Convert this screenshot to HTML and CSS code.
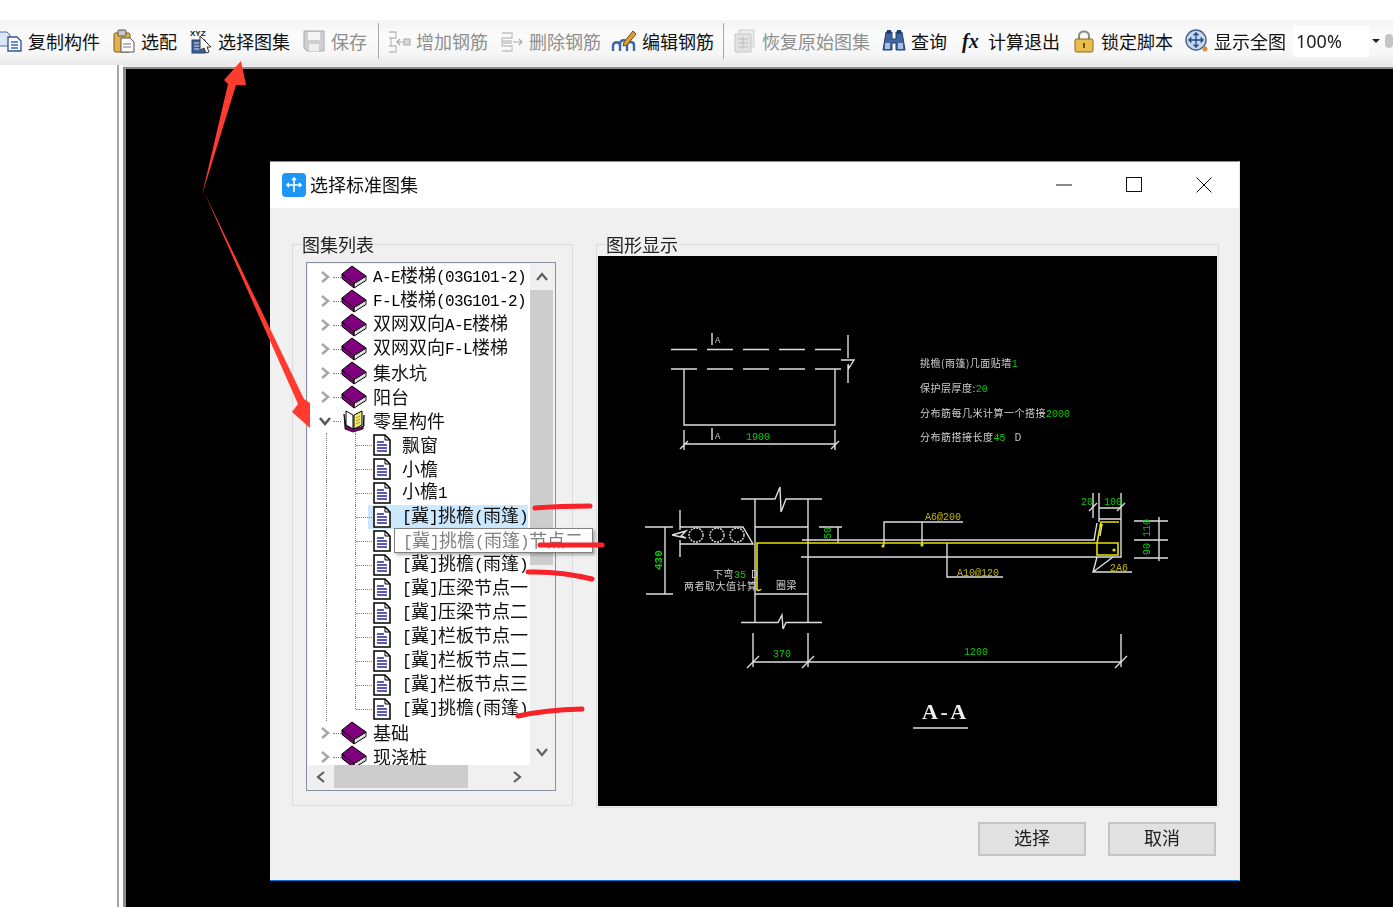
FILE: index.html
```html
<!DOCTYPE html>
<html lang="zh-CN">
<head>
    <meta charset="UTF-8">
    <title>选择标准图集</title>
    <link rel="stylesheet" href="styles.css">
</head>
<body>
    <!-- shared tree icons -->
    <svg class="sprite">
        <symbol id="book" viewBox="0 0 26 24">
            <path d="M13 18.5L25 11V15.5L13 23Z" fill="#fff" stroke="#000"/>
            <path d="M15 20.5L24.500 14.500M15 18.500L24.500 12.500" stroke="#999" stroke-width=".7"/>
            <path d="M1 9V13.500L13 23V18.500Z" fill="#800080" stroke="#000"/>
            <path d="M1 9L11 1L25 11L13 18.500Z" fill="#800080" stroke="#000"/>
        </symbol>
        <symbol id="openbook" viewBox="0 0 24 24">
            <path d="M2 5L3 20L11 23L21 20L22 6V17L12 20L4 17Z" fill="#800080" stroke="#000" stroke-width=".8"/>
            <path d="M4 2L11 6V20L4 16Z" fill="#fff" stroke="#000"/>
            <path d="M12 6L20 2V16L12 20Z" fill="#f5ea70" stroke="#000"/>
            <path d="M14 9L18 7M14 12L18 10M14 15L18 13" stroke="#a09020"/>
        </symbol>
        <symbol id="doc" viewBox="0 0 18 22">
            <path d="M1 1H12L17 6V21H1Z" fill="#fff" stroke="#000" stroke-width="1.5"/>
            <path d="M12 1V6H17" fill="none" stroke="#000"/>
            <path d="M4 8H11M4 11H14M4 14H14M4 17H14" stroke="#2424a8" stroke-width="1.5"/>
        </symbol>
        <symbol id="chev-right" viewBox="0 0 14 14">
            <path d="M4 2L10 7L4 12" fill="none" stroke="#a8a8a8" stroke-width="2.6"/>
        </symbol>
        <symbol id="chev-down" viewBox="0 0 14 14">
            <path d="M2 4L7 10L12 4" fill="none" stroke="#595959" stroke-width="2.6"/>
        </symbol>
    </svg>

    <div class="page">
        <div class="top-strip"></div>

        <!-- Toolbar -->
        <div class="toolbar">
            <div class="tool">
                <svg class="tool-icon" viewBox="0 0 24 24">
                    <path d="M-4 3H8L11 6V17H-4Z" fill="#dbe6f5" stroke="#4a6ea8"/>
                    <path d="M9 8H18L22 12V22H9Z" fill="#fff" stroke="#2f5aa0" stroke-width="1.4"/>
                    <path d="M12 13H19M12 16H19M12 19H19" stroke="#3a6ab0" stroke-width="1.3"/>
                </svg>
                <span>复制构件</span>
            </div>
            <div class="tool">
                <svg class="tool-icon" viewBox="0 0 24 24">
                    <rect x="2" y="4" width="16" height="19" rx="1.5" fill="#e3b04a" stroke="#7a5a1e"/>
                    <rect x="6" y="1" width="8" height="6" rx="1" fill="#c9c9c0" stroke="#555"/>
                    <path d="M9 9H18L22 13V23H9Z" fill="#fff" stroke="#555"/>
                    <path d="M11 15H19M11 18H19" stroke="#777"/>
                </svg>
                <span>选配</span>
            </div>
            <div class="tool">
                <svg class="tool-icon" viewBox="0 0 24 24">
                    <text class="xyz" x="1" y="7">XYZ</text>
                    <rect x="3" y="11" width="13" height="13" fill="#3d5f96" stroke="#26406b"/>
                    <path d="M5 14H14M5 17H14M5 20H14" stroke="#cfe0f5" stroke-width="1.2"/>
                    <path d="M11 7L22 18L18 18L20 23L17 24L15 19L11 21Z" fill="#fff" stroke="#333"/>
                </svg>
                <span>选择图集</span>
            </div>
            <div class="tool off">
                <svg class="tool-icon" viewBox="0 0 24 24">
                    <path d="M2 2H22V22H5L2 19Z" fill="#cfcfcf" stroke="#aaa"/>
                    <rect x="6" y="3" width="12" height="8" fill="#f4f4f4"/>
                    <rect x="7" y="15" width="10" height="7" fill="#eee"/>
                </svg>
                <span>保存</span>
            </div>
            <div class="sep sep-a"></div>
            <div class="tool off">
                <svg class="tool-icon" viewBox="0 0 24 24">
                    <path d="M2 3H9V9H2M2 17H9V23H2M4 9V17" fill="none" stroke="#bdbdbd" stroke-width="1.3"/>
                    <path d="M10 13H17M13 10L10 13L13 16" fill="none" stroke="#a8a8a8" stroke-width="1.2"/>
                    <rect x="17" y="10" width="6" height="6" fill="#d8d8d8" stroke="#aaa"/>
                </svg>
                <span>增加钢筋</span>
            </div>
            <div class="tool off">
                <svg class="tool-icon" viewBox="0 0 24 24">
                    <path d="M2 4H12V9H2M2 17H12V22H2M2 9V17M2 12H12M2 14H12" fill="none" stroke="#c2c2c2" stroke-width="1.3"/>
                    <path d="M13 13H22M19 10L22 13L19 16" fill="none" stroke="#a8a8a8" stroke-width="1.2"/>
                </svg>
                <span>删除钢筋</span>
            </div>
            <div class="tool">
                <svg class="tool-icon tool-icon-wide" viewBox="0 0 26 24">
                    <path d="M2 22V17C2 12 9 12 9 17V22M9 20V15C9 10 16 10 16 15V22M16 21V16C16 12 23 12 23 16V22" fill="none" stroke="#3b66a8" stroke-width="2.4"/>
                    <path d="M13 13L22 2L25 5L16 16L12 17Z" fill="#e0a030" stroke="#6b4a14"/>
                </svg>
                <span>编辑钢筋</span>
            </div>
            <div class="sep sep-b"></div>
            <div class="tool off">
                <svg class="tool-icon" viewBox="0 0 24 24">
                    <path d="M2 5H18V23H2Z" fill="#e2e2e2" stroke="#c6c6c6"/>
                    <path d="M6 1H21V18H18V5H6Z" fill="#ececec" stroke="#cfcfcf"/>
                    <path d="M5 10H15M5 14H15M5 18H15M10 8V20" stroke="#bdbdbd"/>
                </svg>
                <span>恢复原始图集</span>
            </div>
            <div class="tool">
                <svg class="tool-icon" viewBox="0 0 24 24">
                    <path d="M4 3H10V10H14V3H20L23 21H14V14H10V21H1Z" fill="#41659f" stroke="#22406f"/>
                    <path d="M3 14H8V20H3ZM16 14H21V20H16Z" fill="#a8c0e4"/>
                    <rect x="5" y="1" width="4" height="4" fill="#22406f"/>
                    <rect x="15" y="1" width="4" height="4" fill="#22406f"/>
                </svg>
                <span>查询</span>
            </div>
            <div class="tool">
                <svg class="tool-icon" viewBox="0 0 24 24">
                    <text class="fx" x="3" y="19">fx</text>
                </svg>
                <span>计算退出</span>
            </div>
            <div class="tool">
                <svg class="tool-icon" viewBox="0 0 24 24">
                    <path d="M7 11V7C7 1 17 1 17 7V11" fill="none" stroke="#8c8c80" stroke-width="2"/>
                    <rect x="3" y="10" width="18" height="13" rx="1.5" fill="#e8bd4c" stroke="#8a6a1c"/>
                    <path d="M12 14V19" stroke="#6b4f10" stroke-width="2"/>
                </svg>
                <span>锁定脚本</span>
            </div>
            <div class="tool">
                <svg class="tool-icon" viewBox="0 0 24 24">
                    <circle cx="11" cy="11" r="10" fill="#c5d6ef" stroke="#44628f" stroke-width="1.4"/>
                    <path d="M11 4V18M4 11H18M8.5 6.5L11 4L13.5 6.5M8.5 15.5L11 18L13.5 15.5M6.5 8.5L4 11L6.5 13.5M15.5 8.5L18 11L15.5 13.5" fill="none" stroke="#24457c" stroke-width="1.3"/>
                    <circle cx="20" cy="20" r="2.5" fill="#e09030"/>
                </svg>
                <span>显示全图</span>
            </div>
            <div class="zoom-box">
                <span class="zoom-value">100%</span>
            </div>
            <div class="zoom-arrow"></div>
            <div class="zoom-end"></div>
        </div>

        <!-- Workspace behind the dialog -->
        <div class="workspace">
            <div class="side"></div>
            <div class="canvas"></div>
        </div>

        <!-- Dialog -->
        <div class="dialog">
            <div class="title-bar">
                <svg class="app-icon" viewBox="0 0 24 24">
                    <rect width="24" height="24" rx="4" fill="#1e96f5"/>
                    <path d="M12 5V19M5 12H19M10 7L12 5L14 7M7 10L5 12L7 14M17 10L19 12L17 14" fill="none" stroke="#fff" stroke-width="1.6"/>
                </svg>
                <span class="title-text">选择标准图集</span>
                <div class="win-btn">
                    <svg width="16" height="16" viewBox="0 0 16 16"><path d="M0 8H16" stroke="#111"/></svg>
                </div>
                <div class="win-btn">
                    <svg width="16" height="16" viewBox="0 0 16 16"><rect x=".5" y=".5" width="15" height="14" fill="none" stroke="#111"/></svg>
                </div>
                <div class="win-btn">
                    <svg width="16" height="16" viewBox="0 0 16 16"><path d="M.5 .5L15.5 15.5M15.5 .5L.5 15.5" stroke="#111"/></svg>
                </div>
            </div>

            <div class="dialog-body">
                <fieldset class="group group-list">
                    <legend>图集列表</legend>
                    <div class="tree">
                        <div class="tree-list">
                            <div class="row top"><svg class="exp"><use href="#chev-right"/></svg><svg class="book"><use href="#book"/></svg><span><span class="la">A-E</span>楼梯<span class="la">(03G101-2)</span></span></div>
                            <div class="row top"><svg class="exp"><use href="#chev-right"/></svg><svg class="book"><use href="#book"/></svg><span><span class="la">F-L</span>楼梯<span class="la">(03G101-2)</span></span></div>
                            <div class="row top"><svg class="exp"><use href="#chev-right"/></svg><svg class="book"><use href="#book"/></svg><span>双网双向<span class="la">A-E</span>楼梯</span></div>
                            <div class="row top"><svg class="exp"><use href="#chev-right"/></svg><svg class="book"><use href="#book"/></svg><span>双网双向<span class="la">F-L</span>楼梯</span></div>
                            <div class="row top"><svg class="exp"><use href="#chev-right"/></svg><svg class="book"><use href="#book"/></svg><span>集水坑</span></div>
                            <div class="row top"><svg class="exp"><use href="#chev-right"/></svg><svg class="book"><use href="#book"/></svg><span>阳台</span></div>
                            <div class="row top"><svg class="exp"><use href="#chev-down"/></svg><svg class="book"><use href="#openbook"/></svg><span>零星构件</span></div>
                            <div class="row child"><div class="node"><svg class="doc"><use href="#doc"/></svg><span>飘窗</span></div></div>
                            <div class="row child"><div class="node"><svg class="doc"><use href="#doc"/></svg><span>小檐</span></div></div>
                            <div class="row child"><div class="node"><svg class="doc"><use href="#doc"/></svg><span>小檐<span class="la">1</span></span></div></div>
                            <div class="row child"><div class="node selected"><svg class="doc"><use href="#doc"/></svg><span><span class="la">[</span>冀<span class="la">]</span>挑檐<span class="la">(</span>雨篷<span class="la">)</span></span></div></div>
                            <div class="row child"><div class="node"><svg class="doc"><use href="#doc"/></svg></div></div>
                            <div class="row child"><div class="node"><svg class="doc"><use href="#doc"/></svg><span><span class="la">[</span>冀<span class="la">]</span>挑檐<span class="la">(</span>雨篷<span class="la">)</span></span></div></div>
                            <div class="row child"><div class="node"><svg class="doc"><use href="#doc"/></svg><span><span class="la">[</span>冀<span class="la">]</span>压梁节点一</span></div></div>
                            <div class="row child"><div class="node"><svg class="doc"><use href="#doc"/></svg><span><span class="la">[</span>冀<span class="la">]</span>压梁节点二</span></div></div>
                            <div class="row child"><div class="node"><svg class="doc"><use href="#doc"/></svg><span><span class="la">[</span>冀<span class="la">]</span>栏板节点一</span></div></div>
                            <div class="row child"><div class="node"><svg class="doc"><use href="#doc"/></svg><span><span class="la">[</span>冀<span class="la">]</span>栏板节点二</span></div></div>
                            <div class="row child"><div class="node"><svg class="doc"><use href="#doc"/></svg><span><span class="la">[</span>冀<span class="la">]</span>栏板节点三</span></div></div>
                            <div class="row child last"><div class="node"><svg class="doc"><use href="#doc"/></svg><span><span class="la">[</span>冀<span class="la">]</span>挑檐<span class="la">(</span>雨篷<span class="la">)</span></span></div></div>
                            <div class="row top"><svg class="exp"><use href="#chev-right"/></svg><svg class="book"><use href="#book"/></svg><span>基础</span></div>
                            <div class="row top"><svg class="exp"><use href="#chev-right"/></svg><svg class="book"><use href="#book"/></svg><span>现浇桩</span></div>
                        </div>
                        <div class="vbar">
                            <div class="sb-btn"><svg width="14" height="14" viewBox="0 0 14 14"><path d="M2 10L7 4L12 10" fill="none" stroke="#606060" stroke-width="2.2"/></svg></div>
                            <div class="vthumb"></div>
                            <div class="sb-space"></div>
                            <div class="sb-btn"><svg width="14" height="14" viewBox="0 0 14 14"><path d="M2 4L7 10L12 4" fill="none" stroke="#606060" stroke-width="2.2"/></svg></div>
                        </div>
                        <div class="hbar">
                            <div class="sb-btn-h"><svg width="14" height="14" viewBox="0 0 14 14"><path d="M10 2L4 7L10 12" fill="none" stroke="#606060" stroke-width="2.2"/></svg></div>
                            <div class="hthumb"></div>
                            <div class="sb-space"></div>
                            <div class="sb-btn-h"><svg width="14" height="14" viewBox="0 0 14 14"><path d="M4 2L10 7L4 12" fill="none" stroke="#606060" stroke-width="2.2"/></svg></div>
                        </div>
                        <div class="tooltip"><span class="la">[</span>冀<span class="la">]</span>挑檐<span class="la">(</span>雨篷<span class="la">)</span>节点二</div>
                    </div>
                </fieldset>

                <fieldset class="group group-view">
                    <legend>图形显示</legend>
                    <svg class="drawing" viewBox="598 256 619 550">
                        <!-- plan -->
                        <path class="ln" d="M671 349.5H697M707 349.5H733M743 349.5H769M779 349.5H805M815 349.5H841"/>
                        <path class="ln" d="M671 369H697M707 369H733M743 369H769M779 369H805M815 369H841"/>
                        <path class="ln" d="M684 369V425H835V369"/>
                        <path class="ln" d="M712 333V345M712 428V440"/>
                        <path class="ln" d="M848 335V358M841 360H854L849 368L848 364M848 365V383"/>
                        <path class="ln" d="M684 430V450M835 430V450M684 444H835M680 449L688 441M831 449L839 441"/>
                        <text class="tag" x="715" y="343">A</text>
                        <text class="tag" x="715" y="439">A</text>
                        <text class="dim" x="746" y="440">1900</text>

                        <!-- notes -->
                        <text class="note" x="920" y="367">挑檐(雨篷)几面贴墙<tspan class="dim">1</tspan></text>
                        <text class="note" x="920" y="392">保护层厚度:<tspan class="dim">20</tspan></text>
                        <text class="note" x="920" y="417">分布筋每几米计算一个搭接<tspan class="dim">2000</tspan></text>
                        <text class="note" x="920" y="441">分布筋搭接长度<tspan class="dim">45</tspan><tspan dx="9">D</tspan></text>

                        <!-- section: beam -->
                        <path class="ln" d="M741 499H775L780 487L781 512L786 499H822"/>
                        <path class="ln" d="M755 499V622M808 499V622"/>
                        <path class="ln" d="M755 527H808M755 594H808"/>
                        <path class="ln" d="M741 622.5H778L782 615L783 629L786 622.5H822"/>

                        <!-- section: hollow slab -->
                        <path class="ln" d="M680 510V530M680 540V557M672 535L686 531L681 536L686 538L672 535"/>
                        <path class="ln" d="M680 527H743L753 544H680"/>
                        <circle class="ln dotted" cx="696" cy="535" r="7"/>
                        <circle class="ln dotted" cx="717" cy="535" r="7"/>
                        <circle class="ln dotted" cx="737" cy="535" r="7"/>
                        <path class="ln" d="M645 527H673M646 594H673M665 527V594"/>
                        <text class="dim dim-big" transform="translate(662 570) rotate(-90)">430</text>

                        <!-- section: cantilever -->
                        <path class="ln" d="M802 540H1095M801 557H1097"/>
                        <path class="ln" d="M819 527H842M838 527V543"/>
                        <text class="dim" transform="translate(831 539) rotate(-90)">50</text>
                        <path class="ln" d="M884 545V522H963M922 522V545"/>
                        <path class="ln" d="M947 543V577H1003"/>
                        <path class="reb" d="M761 589Q760 591 757 590V543H1097"/>
                        <circle class="reb-dot" cx="883" cy="546" r="1.6"/>
                        <circle class="reb-dot" cx="922" cy="545" r="1.6"/>
                        <text class="rtag" x="925" y="520">A6@200</text>
                        <text class="rtag" x="957" y="576">A10@120</text>
                        <text class="note" x="713" y="578">下弯<tspan class="dim">35</tspan><tspan dx="5">D</tspan></text>
                        <text class="note" x="684" y="590">两者取大值计算</text>
                        <text class="note" x="776" y="589">圈梁</text>

                        <!-- upstand at the slab end -->
                        <path class="ln" d="M1099 493V522M1093 493V518M1121 493V557H1097M1099 508H1121M1099 519H1121"/>
                        <path class="ln" d="M1097 523L1094 540M1102 524L1100 536"/>
                        <path class="ln" d="M1097 557L1093 572H1132M1093 572L1113 557"/>
                        <path class="ln" d="M1089 511L1097 503M1117 511L1125 503"/>
                        <path class="reb" d="M1119 522H1101L1097 543V555H1118V543H1097"/>
                        <circle class="reb-dot" cx="1101" cy="525" r="1.6"/>
                        <circle class="reb-dot" cx="1114" cy="550" r="1.6"/>
                        <text class="dim" x="1081" y="505">20</text>
                        <text class="dim" x="1104" y="505">100</text>
                        <text class="rtag" x="1110" y="571">2A6</text>
                        <path class="ln" d="M1134 521H1168M1134 540H1168M1134 558H1168M1159 517V561"/>
                        <text class="dim" transform="translate(1150 537) rotate(-90)">110</text>
                        <text class="dim" transform="translate(1150 555) rotate(-90)">90</text>

                        <!-- overall dimensions -->
                        <path class="ln" d="M753 633V667M808 633V667M1121 634V667M753 662H1121"/>
                        <path class="ln" d="M747 668L759 656M802 668L814 656M1115 668L1127 656"/>
                        <text class="dim" x="773" y="657">370</text>
                        <text class="dim" x="964" y="655">1200</text>

                        <text class="sec-title" x="922" y="719">A-A</text>
                        <path class="ln" d="M913 728H968"/>
                    </svg>
                </fieldset>
            </div>

            <div class="dialog-foot">
                <div class="btn">选择</div>
                <div class="btn">取消</div>
            </div>
        </div>

        <!-- Red annotations drawn over the screenshot -->
        <svg class="marks" viewBox="0 0 1393 907">
            <polygon points="202,195 228,84 224,80 241,61 246,85 236,85"/>
            <polygon points="204,192 298,404 292,412 310,428 310,403 304,399"/>
            <path d="M535 508Q560 506 590 506"/>
            <path d="M540 545H602"/>
            <path d="M528 572Q560 571 592 579"/>
            <path d="M518 716Q545 710 582 709"/>
        </svg>
    </div>
</body>
</html>
```

FILE: styles.css
```css
* {
    margin: 0;
    padding: 0;
    box-sizing: border-box;
}

body {
    background: #fff;
    color: #111;
    font-family: "Noto Sans CJK SC", "Noto Sans", sans-serif;
    font-size: 18px;
    overflow: hidden;
}

.sprite {
    position: absolute;
    width: 0;
    height: 0;
}

.page {
    position: relative;
    display: flex;
    flex-direction: column;
    height: 907px;
    overflow: hidden;
    filter: blur(0.35px);
}

.top-strip {
    height: 20px;
    background: #fff;
}

/* Toolbar */
.toolbar {
    display: flex;
    align-items: center;
    height: 45px;
    padding-bottom: 3px;
    margin-left: -1px;
    background: linear-gradient(#f3f3f3, #fbfbfb 35%, #f6f6f6 75%, #e8e8e8);
    white-space: nowrap;
}

.tool {
    display: flex;
    align-items: center;
    gap: 5px;
    margin-right: 12px;
    line-height: 24px;
}

.tool.off {
    color: #8f8f8f;
}

.tool-icon {
    flex: none;
    width: 24px;
    height: 24px;
    overflow: visible;
}

.tool-icon-wide {
    margin-left: -2px;
    width: 26px;
}

.xyz {
    font: bold 8px "Liberation Sans", sans-serif;
    fill: #222;
}

.fx {
    font: italic bold 20px "Liberation Serif", serif;
    fill: #111;
}

.sep {
    flex: none;
    width: 1px;
    height: 36px;
    background: #a8a8a8;
}

.sep-a {
    margin: 0 8px 0 -1px;
}

.sep-b {
    margin: 0 9px 0 -3px;
}

.zoom-box {
    display: flex;
    align-items: center;
    flex: none;
    width: 76px;
    height: 31px;
    margin-left: -5px;
    padding-left: 3px;
    background: #fff;
}

.zoom-value {
    font-family: "Noto Sans", sans-serif;
    color: #222;
}

.zoom-arrow {
    flex: none;
    width: 0;
    height: 0;
    margin-left: 3px;
    border-left: 4px solid transparent;
    border-right: 4px solid transparent;
    border-top: 4px solid #222;
}

.zoom-end {
    flex: none;
    width: 8px;
    height: 14px;
    margin-left: 5px;
    background: #c4c4c4;
    border-radius: 4px;
}

/* Workspace */
.workspace {
    flex: 1;
    display: flex;
}

.side {
    width: 119px;
    background: #fff;
    border-right: 2px solid #a6a6a6;
}

.canvas {
    flex: 1;
    margin-left: 4px;
    background: #000;
    border-left: 3px solid #8c8c8c;
    border-top: 2px solid #8c8c8c;
    box-shadow: 0 -2px 0 #ececec;
    margin-top: 2px;
}

/* Dialog */
.dialog {
    position: absolute;
    left: 270px;
    top: 161px;
    width: 970px;
    background: #f0f0f0;
    border-top: 1px solid #5b9bd0;
    border-right: 1px solid #dfeaf4;
    border-bottom: 1px solid #0078d7;
}

.title-bar {
    display: flex;
    align-items: center;
    height: 46px;
    padding-left: 12px;
    background: #fff;
}

.app-icon {
    width: 24px;
    height: 24px;
    margin-right: 4px;
}

.title-text {
    flex: 1;
    margin-top: -3px;
}

.win-btn {
    display: flex;
    align-items: center;
    justify-content: center;
    width: 70px;
    height: 46px;
}

.dialog-body {
    display: flex;
    align-items: flex-start;
    gap: 23px;
    padding: 25px 0 0 22px;
}

.group {
    border: 1px solid #dcdcdc;
    min-width: 0;
}

.group legend {
    height: 23px;
    line-height: 22px;
    color: #222;
}

.group-list {
    width: 281px;
    padding: 6px 15px 14px 13px;
}

.group-list legend {
    margin-left: -4px;
}

.group-view {
    width: 623px;
    padding: 0 1px 1px;
}

.group-view legend {
    margin-left: 8px;
}

.drawing {
    display: block;
    width: 619px;
    height: 550px;
    background: #000;
}

/* Tree */
.tree {
    position: relative;
    display: grid;
    grid-template-columns: 222px 23px;
    grid-template-rows: 501px 23px;
    width: 250px;
    height: 529px;
    padding: 1px;
    background: #f0f0f0;
    border: 1px solid #87919f;
}

.tree-list {
    padding-top: 1px;
    overflow: hidden;
    background: #fff;
    line-height: 22px;
    color: #111;
    white-space: nowrap;
}

.la {
    font-family: "Liberation Mono", monospace;
    font-size: 16px;
    letter-spacing: -0.6px;
    color: #000;
}

.row {
    position: relative;
    display: flex;
    align-items: center;
    height: 24px;
}

.row > span,
.node > span {
    margin-bottom: 2px;
}

.row.top {
    padding-left: 10px;
}

.exp {
    flex: none;
    width: 14px;
    height: 14px;
}

.book {
    flex: none;
    width: 26px;
    height: 24px;
    margin-left: 9px;
    margin-right: 6px;
}

.row.top::before {
    content: "";
    position: absolute;
    left: 25px;
    top: 50%;
    width: 8px;
    border-top: 1px dotted #808080;
}

.row.child {
    padding-left: 60px;
}

.row.child::before {
    content: "";
    position: absolute;
    left: 18px;
    top: 0;
    bottom: 0;
    border-left: 1px dotted #808080;
}

.node {
    position: relative;
    flex: 1;
    display: flex;
    align-items: center;
    height: 24px;
    margin-right: 2px;
    padding-left: 5px;
}

.node::before {
    content: "";
    position: absolute;
    left: -13px;
    top: 0;
    bottom: 0;
    border-left: 1px dotted #808080;
}

.node::after {
    content: "";
    position: absolute;
    left: -12px;
    top: 50%;
    width: 16px;
    border-top: 1px dotted #808080;
}

.last .node::before {
    bottom: 50%;
}

.selected {
    background: #cce8ff;
}

.doc {
    flex: none;
    width: 18px;
    height: 22px;
    margin-right: 11px;
}

.tooltip {
    position: absolute;
    left: 87px;
    top: 265px;
    width: 199px;
    height: 25px;
    padding-left: 8px;
    background: #fff;
    border: 1px solid #808080;
    box-shadow: 2px 2px 3px rgba(0, 0, 0, 0.3);
    color: #808080;
    line-height: 20px;
    white-space: nowrap;
}

.tooltip .la {
    color: #808080;
}

/* Scrollbars */
.vbar {
    display: flex;
    flex-direction: column;
    background: #f0f0f0;
}

.hbar {
    display: flex;
    background: #f0f0f0;
}

.sb-btn {
    display: flex;
    align-items: center;
    justify-content: center;
    height: 26px;
}

.sb-btn-h {
    display: flex;
    align-items: center;
    justify-content: center;
    width: 26px;
}

.vthumb {
    height: 275px;
    background: #cdcdcd;
}

.hthumb {
    width: 134px;
    background: #cdcdcd;
}

.sb-space {
    flex: 1;
}

/* Drawing */
.ln {
    fill: none;
    stroke: #dedede;
    stroke-width: 1.4;
}

.dotted {
    stroke-dasharray: 2 1;
}

.reb {
    fill: none;
    stroke: #e8e000;
    stroke-width: 1.6;
}

.reb-dot {
    fill: #e8e000;
}

.dim {
    font: 10px "Liberation Mono", monospace;
    letter-spacing: 0;
    fill: #00d000;
}

.dim-big {
    font-size: 11px;
    font-weight: bold;
}

.tag {
    font: 9px "Liberation Mono", monospace;
    fill: #c8c8c8;
}

.rtag {
    font: 10px "Liberation Mono", monospace;
    fill: #c4b800;
}

.note {
    font: 10px "Noto Sans CJK SC", sans-serif;
    letter-spacing: 0.5px;
    fill: #cfcfcf;
}

.sec-title {
    font: bold 22px "Liberation Serif", serif;
    letter-spacing: 2.5px;
    fill: #eee;
}

/* Footer buttons */
.dialog-foot {
    display: flex;
    justify-content: flex-end;
    gap: 22px;
    padding: 14px 23px 24px 0;
}

.btn {
    width: 108px;
    height: 34px;
    background: #e1e1e1;
    border: 2px solid #c4c4c4;
    line-height: 26px;
    text-align: center;
    color: #222;
}

/* Red annotations */
.marks {
    position: absolute;
    left: 0;
    top: 0;
    width: 1393px;
    height: 907px;
    pointer-events: none;
}

.marks polygon {
    fill: #ff3b30;
}

.marks path {
    fill: none;
    stroke: #f8222a;
    stroke-width: 5;
    stroke-linecap: round;
}
```
